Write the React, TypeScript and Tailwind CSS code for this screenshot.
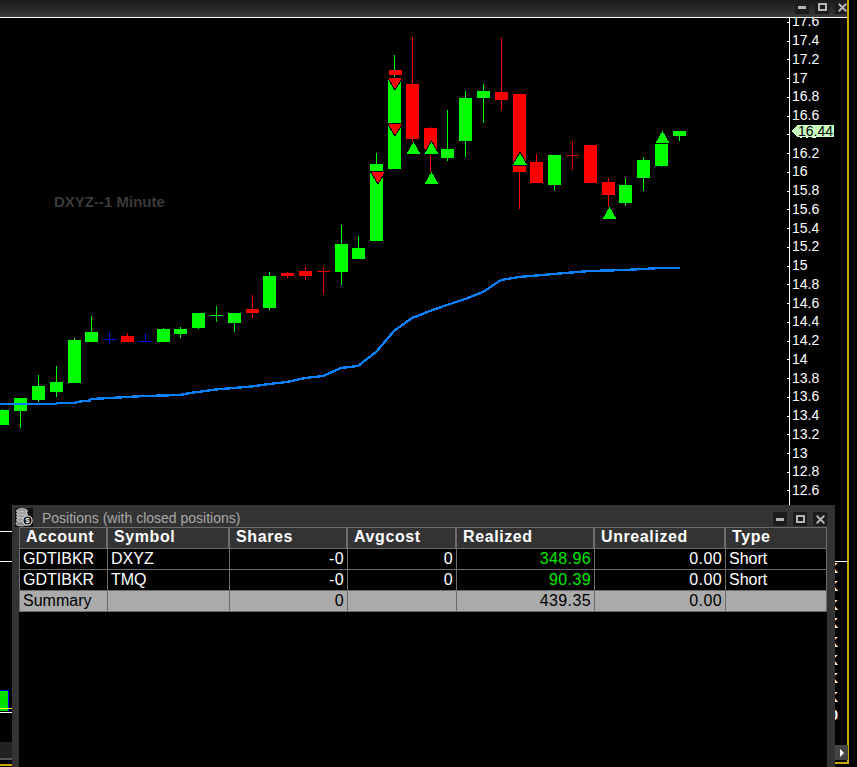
import { X } from "lucide-react";

const SANS = "font-['Liberation_Sans',Arial,sans-serif]";

const GREEN = "#00ff00";
const RED = "#ff0000";
const BLUE = "#0000e0";

type Candle = { x: number; top: number; bottom: number; open: number; close: number; color: string };

// x is the wick column; body runs x-6 .. x+7
const CANDLES: Candle[] = [
  { x: 2, top: 409, bottom: 425, open: 410, close: 425, color: GREEN },
  { x: 20, top: 398, bottom: 428, open: 398, close: 411, color: GREEN },
  { x: 38, top: 375, bottom: 402, open: 386, close: 400, color: GREEN },
  { x: 56, top: 366, bottom: 397, open: 382, close: 392, color: GREEN },
  { x: 74, top: 338, bottom: 383, open: 340, close: 383, color: GREEN },
  { x: 91, top: 316, bottom: 342, open: 332, close: 342, color: GREEN },
  { x: 127, top: 333, bottom: 342, open: 336, close: 342, color: RED },
  { x: 163, top: 328, bottom: 342, open: 329, close: 342, color: GREEN },
  { x: 180, top: 327, bottom: 338, open: 329, close: 334, color: GREEN },
  { x: 198, top: 313, bottom: 329, open: 313, close: 328, color: GREEN },
  { x: 234, top: 313, bottom: 332, open: 313, close: 323, color: GREEN },
  { x: 252, top: 295, bottom: 318, open: 309, close: 313, color: RED },
  { x: 269, top: 272, bottom: 310, open: 276, close: 308, color: GREEN },
  { x: 287, top: 272, bottom: 278, open: 273, close: 276, color: RED },
  { x: 305, top: 267, bottom: 280, open: 271, close: 276, color: RED },
  { x: 341, top: 225, bottom: 285, open: 244, close: 272, color: GREEN },
  { x: 358, top: 236, bottom: 259, open: 248, close: 259, color: GREEN },
  { x: 376, top: 153, bottom: 241, open: 164, close: 241, color: GREEN },
  { x: 394, top: 55, bottom: 169, open: 79, close: 169, color: GREEN },
  { x: 412, top: 37, bottom: 143, open: 84, close: 139, color: RED },
  { x: 430, top: 127, bottom: 172, open: 128, close: 149, color: RED },
  { x: 447, top: 110, bottom: 161, open: 149, close: 158, color: GREEN },
  { x: 465, top: 91, bottom: 157, open: 98, close: 141, color: GREEN },
  { x: 483, top: 84, bottom: 123, open: 91, close: 98, color: GREEN },
  { x: 501, top: 38, bottom: 110, open: 92, close: 100, color: RED },
  { x: 519, top: 94, bottom: 209, open: 94, close: 172, color: RED },
  { x: 536, top: 154, bottom: 183, open: 162, close: 183, color: RED },
  { x: 554, top: 155, bottom: 190, open: 155, close: 185, color: GREEN },
  { x: 590, top: 145, bottom: 183, open: 145, close: 183, color: RED },
  { x: 608, top: 178, bottom: 208, open: 182, close: 195, color: RED },
  { x: 625, top: 178, bottom: 206, open: 185, close: 203, color: GREEN },
  { x: 643, top: 157, bottom: 191, open: 160, close: 178, color: GREEN },
  { x: 661, top: 131, bottom: 167, open: 144, close: 166, color: GREEN },
  { x: 679, top: 131, bottom: 141, open: 131, close: 136, color: GREEN },
];

// dojis: wick column, wick span, bar row
const CROSSES = [
  { x: 109, top: 332, bottom: 344, bar: 339, color: BLUE },
  { x: 145, top: 333, bottom: 342, bar: 341, color: BLUE },
  { x: 216, top: 306, bottom: 322, bar: 315, color: "#00e000" },
  { x: 323, top: 267, bottom: 294, bar: 271, color: "#e00000" },
  { x: 572, top: 141, bottom: 170, bar: 155, color: "#e00000" },
];

const SELLS = [
  { x: 378, y: 171 },
  { x: 395, y: 77 },
  { x: 395, y: 123 },
];

const BUYS = [
  { x: 413.5, y: 142 },
  { x: 431.5, y: 142 },
  { x: 431.5, y: 172 },
  { x: 520, y: 153 },
  { x: 609.5, y: 207 },
  { x: 662.5, y: 131 },
];

const AVG_LINE =
  "0,404 56,404 57,403 74,403 80,401.5 90,400.5 91,399 110,398 127,397 145,396 163,395.5 180,395 190,393 205,391 216,389.5 234,388 252,386.5 269,384 287,382 305,378 323,376 341,368 358,366 376,352 394,331 412,318 430,311 447,305 465,299 483,292 501,280 519,277 554,274 590,271 625,270 660,268 680,268";

const AXIS = [
  "17.6", "17.4", "17.2", "17", "16.8", "16.6", "", "16.2", "16", "15.8", "15.6", "15.4", "15.2",
  "15", "14.8", "14.6", "14.4", "14.2", "14", "13.8", "13.6", "13.4", "13.2", "13", "12.8", "12.6",
];

function PriceChart() {
  return (
    <svg width={849} height={505} viewBox="0 18 849 505" className="block" shapeRendering="crispEdges">
      {CANDLES.map((c, i) => (
        <g key={i} fill={c.color}>
          <rect x={c.x} y={c.top} width={1} height={c.bottom - c.top} />
          <rect x={c.x - 6} y={c.open} width={13} height={c.close - c.open} />
        </g>
      ))}
      {CROSSES.map((c, i) => (
        <g key={i} fill={c.color}>
          <rect x={c.x} y={c.top} width={1} height={c.bottom - c.top} />
          <rect x={c.x - 6} y={c.bar} width={13} height={1} />
        </g>
      ))}
      <rect x={389} y={70} width={13} height={5} fill={RED} />
      {SELLS.map((s, i) => (
        <polygon
          key={i}
          points={`${s.x - 8},${s.y} ${s.x + 8},${s.y} ${s.x},${s.y + 13}`}
          fill={RED}
          stroke="#000"
          strokeWidth={1}
        />
      ))}
      {BUYS.map((b, i) => (
        <polygon
          key={i}
          points={`${b.x - 7.5},${b.y + 12} ${b.x + 7.5},${b.y + 12} ${b.x},${b.y - 1}`}
          fill={GREEN}
          stroke="#000"
          strokeWidth={1}
        />
      ))}
      <polyline points={AVG_LINE} fill="none" stroke="#0a80ff" strokeWidth={2.4} />

      <rect x={789} y={18} width={1} height={505} fill="#fff" />
      {AXIS.map((label, i) => {
        const y = 21 + i * 18.74;
        return (
          <g key={i}>
            <rect x={787} y={Math.round(y + 1)} width={2} height={1} fill="#fff" />
            {label && (
              <text
                x={792}
                y={i === 0 ? y + 5 : y + 5.5}
                fill="#fff"
                fontSize={14}
                fontFamily="'Liberation Sans', Arial, sans-serif"
                shapeRendering="auto"
              >
                {label}
              </text>
            )}
          </g>
        );
      })}
      <polygon points="791,131 797,125 834,125 834,137 797,137" fill="#c8ffc0" />
      <rect x={800} y={137} width={2} height={1} fill="#fff" />
      <rect x={806} y={137} width={2} height={1} fill="#fff" />
      <rect x={812} y={137} width={4} height={1} fill="#fff" />
      <text x={798} y={136} fill="#000" fontSize={14} fontFamily="'Liberation Sans', Arial, sans-serif">
        16.44
      </text>
      <text x={54} y={207} fill="#3a3a3a" fontSize={15} fontWeight={700} fontFamily="'Liberation Sans', Arial, sans-serif">
        DXYZ--1 Minute
      </text>
    </svg>
  );
}

function WindowButtons() {
  return (
    <div className="flex items-center gap-[6px]">
      <span className="flex h-[14px] w-[14px] items-center justify-center bg-[#1c1c1c]">
        <span className="h-[3px] w-[8px] bg-[#b5b5b5]" />
      </span>
      <span className="flex h-[14px] w-[14px] items-center justify-center bg-[#1c1c1c]">
        <span className="h-[8px] w-[9px] border-2 border-[#b5b5b5]" />
      </span>
      <span className="flex h-[14px] w-[14px] items-center justify-center bg-[#1c1c1c]">
        <X size={13} strokeWidth={3.6} className="text-[#b5b5b5]" />
      </span>
    </div>
  );
}

function CoinsIcon() {
  return (
    <svg width={18} height={19} viewBox="0 0 18 19" className="block">
      <rect width={18} height={19} fill="#111" />
      {[2, 5, 8, 11].map((y) => (
        <ellipse key={y} cx={7} cy={y + 1} rx={5.5} ry={2.4} fill="#9a9a9a" stroke="#e0e0e0" strokeWidth={0.7} />
      ))}
      <ellipse cx={6} cy={15.5} rx={5} ry={2.4} fill="#8a8a8a" stroke="#ddd" strokeWidth={0.7} />
      <circle cx={12.5} cy={12.5} r={4.6} fill="#111" stroke="#d8d8d8" strokeWidth={1.2} />
      <text x={12.5} y={15.2} textAnchor="middle" fontSize={8} fontWeight={700} fill="#e8e8e8" fontFamily="'Liberation Sans', Arial, sans-serif">
        $
      </text>
    </svg>
  );
}

const COLUMNS = "grid-cols-[88px_122px_118px_109px_138px_131px_102px]";

const ROWS = [
  ["GDTIBKR", "DXYZ", "-0", "0", "348.96", "0.00", "Short"],
  ["GDTIBKR", "TMQ", "-0", "0", "90.39", "0.00", "Short"],
];

function PositionsTable() {
  const headers = ["Account", "Symbol", "Shares", "Avgcost", "Realized", "Unrealized", "Type"];
  return (
    <div className="w-[808px] text-[16px] leading-[20px]">
      <div className={`grid h-[22px] ${COLUMNS} border border-[#6c6c6c] bg-[#333333] font-bold leading-[18px] text-white`}>
        {headers.map((h, i) => (
          <div key={h} className={`pl-[6px] tracking-[0.6px] ${i < 6 ? "border-r-2 border-[#6c6c6c]" : ""}`}>
            {h}
          </div>
        ))}
      </div>
      {ROWS.map((row) => (
        <div key={row[1]} className={`grid h-[21px] ${COLUMNS} border-x border-b border-[#6c6c6c] bg-black text-white`}>
          {row.map((cell, i) => {
            const numeric = i >= 2 && i <= 5;
            return (
              <div
                key={i}
                className={`border-[#6c6c6c] ${i < 6 ? "border-r" : ""} ${
                  numeric ? "pr-[3px] text-right tracking-[0.4px]" : "pl-[3px]"
                } ${i === 4 ? "text-[#00e800]" : ""}`}
              >
                {cell}
              </div>
            );
          })}
        </div>
      ))}
      <div className={`grid h-[21px] ${COLUMNS} border-x border-b border-[#6c6c6c] bg-[#aaaaaa] text-black`}>
        {["Summary", "", "0", "", "439.35", "0.00", ""].map((cell, i) => (
          <div
            key={i}
            className={`border-[#6c6c6c] ${i < 6 ? "border-r" : ""} ${
              i >= 2 && i <= 5 ? "pr-[3px] text-right tracking-[0.4px]" : "pl-[3px]"
            }`}
          >
            {cell}
          </div>
        ))}
      </div>
    </div>
  );
}

export default function App() {
  return (
    <div className={`relative h-[767px] w-[857px] overflow-hidden bg-black ${SANS}`}>
      {/* chart window */}
      <div className="flex h-[17px] w-[849px] items-start justify-end bg-gradient-to-b from-[#1a1a1a] to-[#3a3a3a]">
        <WindowButtons />
      </div>
      <div className="h-px w-[847px] bg-white" />
      <PriceChart />
      <div className="absolute right-[8px] top-0 h-[764px] w-[2px] bg-[#c8a800]" />

      {/* bits of the windows behind the positions panel */}
      <div className="absolute left-0 top-[531px] h-px w-[12px] bg-white" />
      <div className="absolute left-0 top-[561px] h-px w-[12px] bg-white" />
      <div className="absolute left-0 top-[690px] h-[21px] w-[9px] border-r border-t border-[#0000ff] bg-[#00e000]" />
      <div className="absolute left-0 top-[708px] h-px w-[12px] bg-[#ffff33]" />
      <div className="absolute left-0 top-[712px] h-px w-[12px] bg-white" />
      <div className="absolute left-0 top-[742px] h-[16px] w-[12px] bg-[#222222]" />
      <div className="absolute left-0 top-[758px] h-[2px] w-[12px] bg-[#555555]" />
      <div className="absolute left-0 top-[764px] h-[2px] w-[12px] bg-[#c8a800]" />
      <div className="absolute left-[835px] top-[561px] h-px w-[13px] bg-white" />
      <div className="absolute left-[825px] top-[559px] flex w-[13px] flex-col text-[15px] font-bold leading-[18.4px] text-white">
        {["K", "K", "K", "K", "K", "K", "K", "K", "0"].map((k, i) => (
          <span key={i} className="text-right">
            {k}
          </span>
        ))}
      </div>
      <div className="absolute left-[835px] top-[745px] flex h-[15px] w-[13px] items-center justify-center bg-[#444444]">
        <span className="h-0 w-0 border-y-[4px] border-l-[4px] border-y-transparent border-l-white" />
      </div>
      <div className="absolute left-[835px] top-[762px] h-[2px] w-[14px] bg-[#c8a800]" />

      {/* positions window */}
      <div className="absolute left-[12px] top-[505px] h-[262px] w-[823px] bg-[#333333]">
        <div className="flex h-[22px] items-end pl-[3px] pr-[8px]">
          <CoinsIcon />
          <span className="ml-[9px] flex-1 self-center pt-[3px] text-[14px] leading-[16px] text-[#a8a8a8]">
            Positions (with closed positions)
          </span>
          <div className="mb-px">
            <WindowButtons />
          </div>
        </div>
        <div className="ml-[7px] h-[240px] w-[808px] bg-black">
          <PositionsTable />
        </div>
      </div>
    </div>
  );
}
